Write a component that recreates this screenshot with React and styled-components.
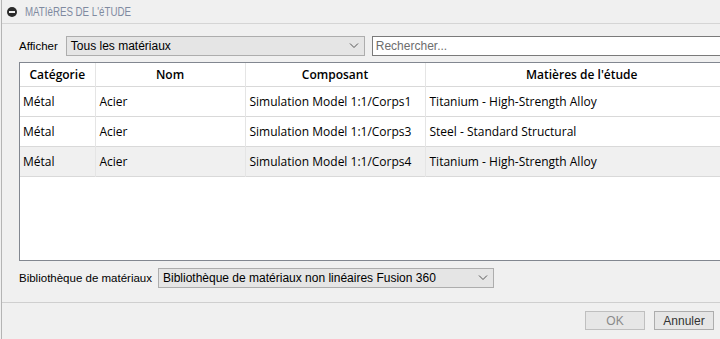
import React from 'react';
import styled, { createGlobalStyle } from 'styled-components';

const GlobalStyle = createGlobalStyle`
  html, body { margin: 0; padding: 0; background: #f0f0f0; }
  body { overflow: hidden; }
`;

const rows = [
  { id: 1, cat: 'Métal', name: 'Acier', comp: 'Simulation Model 1:1/Corps1', mat: 'Titanium - High-Strength Alloy' },
  { id: 2, cat: 'Métal', name: 'Acier', comp: 'Simulation Model 1:1/Corps3', mat: 'Steel - Standard Structural' },
  { id: 3, cat: 'Métal', name: 'Acier', comp: 'Simulation Model 1:1/Corps4', mat: 'Titanium - High-Strength Alloy', active: true },
];

const Chevron = () => (
  <svg width="10" height="6" viewBox="0 0 10 6">
    <path d="M1 0.5 L5 4.5 L9 0.5" fill="none" stroke="#555" strokeWidth="1" />
  </svg>
);

const App = () => (
  <>
    <GlobalStyle />
    <Panel>
      <Header>
        <Bullet />
        <HeaderTitle>MATIèRES DE L'éTUDE</HeaderTitle>
      </Header>
      <Body>
        <FilterRow>
          <Label $gap={8}>Afficher</Label>
          <Select width={299}>
            <span>Tous les matériaux</span>
            <Chevron />
          </Select>
          <Search placeholder="Rechercher..." />
        </FilterRow>
        <TableBox>
          <Table>
            <colgroup>
              <col style={{ width: 75 }} />
              <col style={{ width: 150 }} />
              <col style={{ width: 180 }} />
              <col />
            </colgroup>
            <thead>
              <tr>
                <Th>Catégorie</Th>
                <Th>Nom</Th>
                <Th>Composant</Th>
                <Th>Matières de l'étude</Th>
              </tr>
            </thead>
            <tbody>
              {rows.map((r) => (
                <Tr key={r.id} $active={r.active}>
                  <Td>{r.cat}</Td>
                  <Td>{r.name}</Td>
                  <Td>{r.comp}</Td>
                  <Td>{r.mat}</Td>
                </Tr>
              ))}
            </tbody>
          </Table>
        </TableBox>
        <LibraryRow>
          <Label $gap={6}>Bibliothèque de matériaux</Label>
          <Select width={336}>
            <span>Bibliothèque de matériaux non linéaires Fusion 360</span>
            <Chevron />
          </Select>
        </LibraryRow>
      </Body>
      <Footer>
        <Button disabled>OK</Button>
        <Button>Annuler</Button>
      </Footer>
    </Panel>
  </>
);

export default App;

const Panel = styled.div`
  width: 719px;
  height: 339px;
  box-sizing: border-box;
  border-left: 1px solid #b4b4b4;
  margin-left: 1px;
  background: #f0f0f0;
  display: flex;
  flex-direction: column;
  overflow: hidden;
  font-family: "Liberation Sans", Arial, sans-serif;
`;

const Header = styled.div`
  height: 24px;
  flex: none;
  box-sizing: border-box;
  border-bottom: 1px solid #d5d5d5;
  display: flex;
  align-items: center;
  padding-left: 5px;
  gap: 8px;
`;

const Bullet = styled.span`
  width: 10px;
  height: 10px;
  border-radius: 50%;
  background: #2b2b2b;
  position: relative;
  flex: none;
  &::after {
    content: '';
    position: absolute;
    left: 2px;
    top: 4px;
    width: 6px;
    height: 2px;
    background: #f0f0f0;
  }
`;

const HeaderTitle = styled.span`
  display: inline-block;
  font-size: 12px;
  color: #7f8aa0;
  transform: scaleX(0.81);
  transform-origin: left center;
  white-space: nowrap;
`;

const Body = styled.div`
  padding: 12px 0 0 17px;
  display: flex;
  flex-direction: column;
  width: 740px;
  flex: none;
`;

const FilterRow = styled.div`
  display: flex;
  align-items: center;
  height: 20px;
`;

const Label = styled.span`
  font-size: 11.5px;
  color: #000;
  margin-right: ${(p) => p.$gap}px;
  white-space: nowrap;
`;

const Select = styled.div`
  width: ${(p) => p.width}px;
  height: 20px;
  flex: none;
  box-sizing: border-box;
  border: 1px solid #adadad;
  background: #e5e5e5;
  display: flex;
  align-items: center;
  justify-content: space-between;
  padding: 0 5px 0 4px;
  font-size: 12px;
  color: #000;
`;

const Search = styled.input`
  margin-left: 7px;
  width: 360px;
  height: 20px;
  box-sizing: border-box;
  border: 1px solid #7a7a7a;
  background: #fff;
  padding: 0 3px;
  font-family: "Liberation Sans", Arial, sans-serif;
  font-size: 12px;
  outline: none;
  &::placeholder { color: #6d6d6d; }
`;

const TableBox = styled.div`
  margin-top: 6px;
  height: 199px;
  box-sizing: border-box;
  border: 1px solid #828790;
  background: #fff;
  width: 720px;
`;

const Table = styled.table`
  border-collapse: collapse;
  width: 100%;
  table-layout: fixed;
  font-family: "Open Sans", "Noto Sans", sans-serif;
  font-size: 12px;
  color: #000;
`;

const Th = styled.th`
  height: 23px;
  font-weight: 600;
  text-align: center;
  padding: 0;
  border-left: 1px solid #e5e5e5;
  &:first-child { border-left: none; }
`;

const Tr = styled.tr`
  background: ${(p) => (p.$active ? '#f0f0f0' : '#fff')};
  border-top: 1px solid #d9d9d9;
  &:last-child { border-bottom: 1px solid #d9d9d9; }
`;

const Td = styled.td`
  height: 29px;
  padding: 0 4px;
  white-space: nowrap;
  overflow: hidden;
  border-left: 1px solid #e5e5e5;
  &:first-child { border-left: none; padding-left: 3px; }
`;

const LibraryRow = styled.div`
  margin-top: 7px;
  display: flex;
  align-items: center;
  height: 20px;
`;

const Footer = styled.div`
  margin-top: auto;
  height: 37px;
  flex: none;
  box-sizing: border-box;
  border-top: 1px solid #cfcfcf;
  display: flex;
  justify-content: flex-end;
  align-items: flex-start;
  padding: 8px 6px 0 0;
  gap: 9px;
`;

const Button = styled.button`
  width: 60px;
  height: 19px;
  box-sizing: border-box;
  border: 1px solid #adadad;
  background: #e6e6e6;
  font-family: "Liberation Sans", Arial, sans-serif;
  font-size: 12px;
  color: #333;
  padding: 0;
  &:disabled { color: #8a8a8a; border-color: #bfbfbf; }
`;
